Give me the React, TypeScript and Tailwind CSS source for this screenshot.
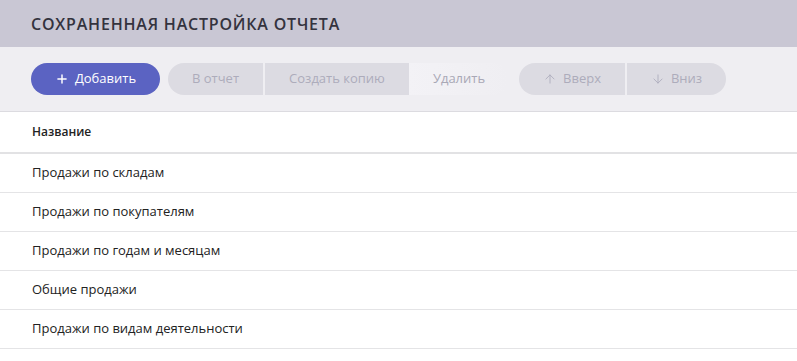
import React from 'react';
import { Plus, ArrowUp, ArrowDown } from 'lucide-react';

const reports = [
  'Продажи по складам',
  'Продажи по покупателям',
  'Продажи по годам и месяцам',
  'Общие продажи',
  'Продажи по видам деятельности',
];

export default function App() {
  return (
    <div
      className="w-[797px] h-[361px] bg-white overflow-hidden"
      style={{ fontFamily: '"Open Sans", "Liberation Sans", sans-serif' }}
    >
      <div className="h-[47px] bg-[#c9c7d4] flex items-center px-[31px]">
        <h1 className="text-[16px] font-semibold uppercase tracking-[0.05em] text-[#34333e]">
          Сохраненная настройка отчета
        </h1>
      </div>

      <div className="h-[65px] bg-[#efeef2] border-b border-[#dcdbe0] flex items-center px-[31px] pb-px">
        <button className="h-8 w-[129px] rounded-full bg-[#5b63c2] text-white text-[13px] flex items-center justify-center gap-1.5">
          <Plus className="w-3.5 h-3.5" strokeWidth={2.5} />
          Добавить
        </button>

        <div className="ml-2 flex items-center gap-[2px]">
          <button className="h-8 w-[95px] rounded-l-full bg-[#dcdbe2] text-[#adacbb] text-[13px]">
            В отчет
          </button>
          <button className="h-8 w-[144px] bg-[#dcdbe2] text-[#adacbb] text-[13px]">
            Создать копию
          </button>
          <button className="h-8 w-[100px] -ml-[2px] rounded-r-full bg-gradient-to-r from-[#f3f2f6] to-[#efeef2] text-[#a9a8b6] text-[13px]">
            Удалить
          </button>
        </div>

        <div className="ml-[10px] flex items-center gap-[2px]">
          <button className="h-8 w-[106px] rounded-l-full bg-[#dcdbe2] text-[#adacbb] text-[13px] flex items-center justify-center gap-1.5">
            <ArrowUp className="w-3.5 h-3.5" strokeWidth={1.5} />
            Вверх
          </button>
          <button className="h-8 w-[99px] rounded-r-full bg-[#dcdbe2] text-[#adacbb] text-[13px] flex items-center justify-center gap-1.5">
            <ArrowDown className="w-3.5 h-3.5" strokeWidth={1.5} />
            Вниз
          </button>
        </div>
      </div>

      <div className="h-[42px] flex items-center px-[32px] border-b-2 border-[#e2e2e4]">
        <span className="text-[12px] font-semibold text-[#222]">Название</span>
      </div>

      {reports.map((name) => (
        <div
          key={name}
          className="h-[39px] flex items-center px-[32px] border-b border-[#e4e4e6]"
        >
          <span className="text-[13px] text-[#222]">{name}</span>
        </div>
      ))}
    </div>
  );
}
